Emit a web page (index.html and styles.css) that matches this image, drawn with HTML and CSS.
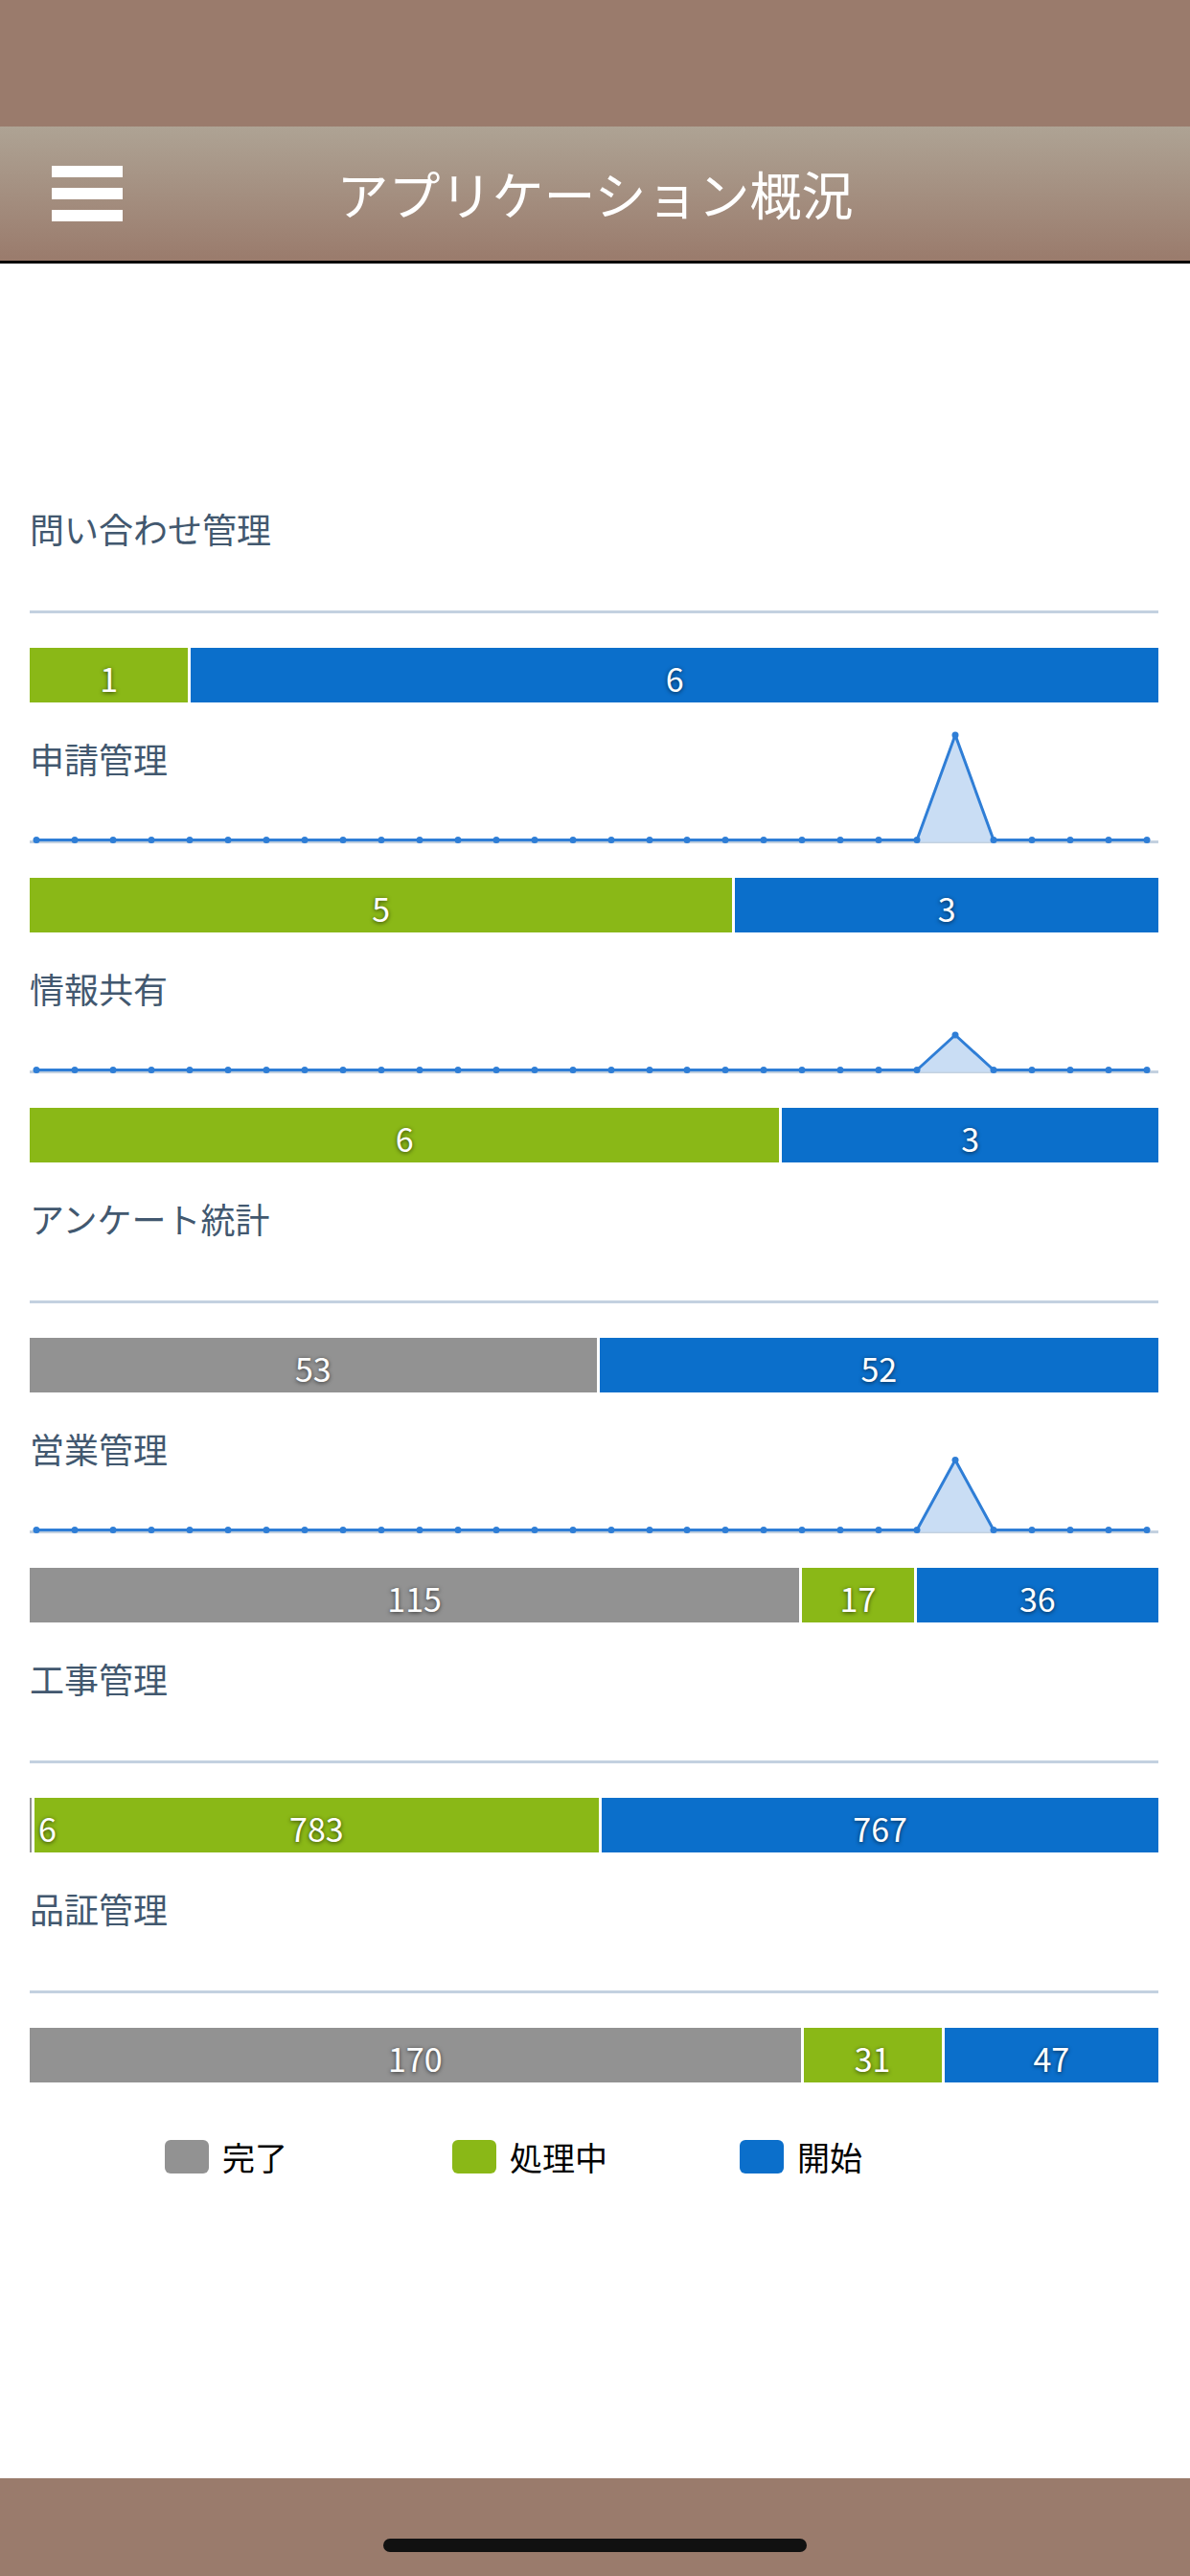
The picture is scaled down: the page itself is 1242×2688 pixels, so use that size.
FILE: index.html
```html
<!DOCTYPE html>
<html lang="ja">
<head>
<meta charset="utf-8">
<title>アプリケーション概況</title>
<link rel="stylesheet" href="styles.css">
</head>
<body>
<div class="page">
  <div class="status-bar"></div>
  <header class="app-header">
    <div class="menu-btn"><span></span><span></span><span></span></div>
    <h1 class="title">アプリケーション概況</h1>
    <div></div>
  </header>

  <svg class="defs" width="0" height="0">
    <defs>
      <marker id="dot" markerUnits="userSpaceOnUse" markerWidth="10" markerHeight="10" refX="5" refY="5">
        <circle cx="5" cy="5" r="3.5" fill="#2f7ed6"/>
      </marker>
    </defs>
  </svg>

  <main class="content">
    <section class="app">
      <div class="app-name">問い合わせ管理</div>
      <svg class="chart" viewBox="0 0 1178 147"><rect class="axis" x="0" y="108" width="1178" height="3"/></svg>
      <div class="bar">
        <div class="seg green" style="width:14.2857%"><span>1</span></div>
        <div class="seg blue" style="width:85.7143%"><span>6</span></div>
      </div>
    </section>

    <section class="app">
      <div class="app-name">申請管理</div>
      <svg class="chart" viewBox="0 0 1178 147">
        <rect class="axis" x="0" y="108" width="1178" height="3"/>
        <polygon class="area" points="926,109.5 926,107.5 966,-2 1006,107.5 1006,109.5"/>
        <polyline class="line" points="7,107.5 47,107.5 87,107.5 127,107.5 167,107.5 207,107.5 247,107.5 287,107.5 327,107.5 367,107.5 407,107.5 447,107.5 487,107.5 527,107.5 567,107.5 607,107.5 647,107.5 686,107.5 726,107.5 766,107.5 806,107.5 846,107.5 886,107.5 926,107.5 966,-2 1006,107.5 1046,107.5 1086,107.5 1126,107.5 1166,107.5"/>
      </svg>
      <div class="bar">
        <div class="seg green" style="width:62.5%"><span>5</span></div>
        <div class="seg blue" style="width:37.5%"><span>3</span></div>
      </div>
    </section>

    <section class="app">
      <div class="app-name">情報共有</div>
      <svg class="chart" viewBox="0 0 1178 147">
        <rect class="axis" x="0" y="108" width="1178" height="3"/>
        <polygon class="area" points="926,109.5 926,107.5 966,71 1006,107.5 1006,109.5"/>
        <polyline class="line" points="7,107.5 47,107.5 87,107.5 127,107.5 167,107.5 207,107.5 247,107.5 287,107.5 327,107.5 367,107.5 407,107.5 447,107.5 487,107.5 527,107.5 567,107.5 607,107.5 647,107.5 686,107.5 726,107.5 766,107.5 806,107.5 846,107.5 886,107.5 926,107.5 966,71 1006,107.5 1046,107.5 1086,107.5 1126,107.5 1166,107.5"/>
      </svg>
      <div class="bar">
        <div class="seg green" style="width:66.6667%"><span>6</span></div>
        <div class="seg blue" style="width:33.3333%"><span>3</span></div>
      </div>
    </section>

    <section class="app">
      <div class="app-name">アンケート統計</div>
      <svg class="chart" viewBox="0 0 1178 147"><rect class="axis" x="0" y="108" width="1178" height="3"/></svg>
      <div class="bar">
        <div class="seg gray" style="width:50.4762%"><span>53</span></div>
        <div class="seg blue" style="width:49.5238%"><span>52</span></div>
      </div>
    </section>

    <section class="app">
      <div class="app-name">営業管理</div>
      <svg class="chart" viewBox="0 0 1178 147">
        <rect class="axis" x="0" y="108" width="1178" height="3"/>
        <polygon class="area" points="926,109.5 926,107.5 966,34.5 1006,107.5 1006,109.5"/>
        <polyline class="line" points="7,107.5 47,107.5 87,107.5 127,107.5 167,107.5 207,107.5 247,107.5 287,107.5 327,107.5 367,107.5 407,107.5 447,107.5 487,107.5 527,107.5 567,107.5 607,107.5 647,107.5 686,107.5 726,107.5 766,107.5 806,107.5 846,107.5 886,107.5 926,107.5 966,34.5 1006,107.5 1046,107.5 1086,107.5 1126,107.5 1166,107.5"/>
      </svg>
      <div class="bar">
        <div class="seg gray" style="width:68.4524%"><span>115</span></div>
        <div class="seg green" style="width:10.1190%"><span>17</span></div>
        <div class="seg blue" style="width:21.4286%"><span>36</span></div>
      </div>
    </section>

    <section class="app">
      <div class="app-name">工事管理</div>
      <svg class="chart" viewBox="0 0 1178 147"><rect class="axis" x="0" y="108" width="1178" height="3"/></svg>
      <div class="bar">
        <div class="seg gray tiny" style="width:0.3856%"><span>6</span></div>
        <div class="seg green" style="width:50.3213%"><span>783</span></div>
        <div class="seg blue" style="width:49.2931%"><span>767</span></div>
      </div>
    </section>

    <section class="app">
      <div class="app-name">品証管理</div>
      <svg class="chart" viewBox="0 0 1178 147"><rect class="axis" x="0" y="108" width="1178" height="3"/></svg>
      <div class="bar">
        <div class="seg gray" style="width:68.5484%"><span>170</span></div>
        <div class="seg green" style="width:12.5000%"><span>31</span></div>
        <div class="seg blue" style="width:18.9516%"><span>47</span></div>
      </div>
    </section>

    <div class="legend">
      <div class="legend-item"><span class="swatch gray"></span><span class="legend-text">完了</span></div>
      <div class="legend-item"><span class="swatch green"></span><span class="legend-text">処理中</span></div>
      <div class="legend-item"><span class="swatch blue"></span><span class="legend-text">開始</span></div>
    </div>
  </main>

  <footer class="home-area"><div class="home-indicator"></div></footer>
</div>
</body>
</html>
```

FILE: styles.css
```css
* { box-sizing: border-box; }

html, body {
  margin: 0;
  padding: 0;
  background: #ffffff;
}

body {
  font-family: "Noto Sans CJK JP", "Noto Sans", sans-serif;
}

.page {
  width: 1242px;
  height: 2688px;
  display: flex;
  flex-direction: column;
  overflow: hidden;
}

.status-bar {
  height: 132px;
  background: #9a7b6c;
  flex: 0 0 auto;
}

.app-header {
  height: 143px;
  flex: 0 0 auto;
  background: linear-gradient(to bottom, #aea394 0%, #a48f80 50%, #9a7b6c 100%);
  border-bottom: 3px solid #000000;
  display: grid;
  grid-template-columns: 1fr auto 1fr;
  align-items: center;
  padding-left: 54px;
}

.menu-btn {
  display: flex;
  flex-direction: column;
  gap: 11px;
  width: 74px;
}

.menu-btn span {
  display: block;
  height: 12px;
  background: #ffffff;
}

.title {
  margin: 0;
  font-size: 54px;
  font-weight: 400;
  color: #ffffff;
  line-height: 60px;
  white-space: nowrap;
  position: relative;
  left: -27px;
}

.defs {
  position: absolute;
  width: 0;
  height: 0;
}

.content {
  padding: 254px 33px 0 31px;
  flex: 1 1 auto;
}

.app {
  display: grid;
  grid-template-rows: 147px 57px;
  margin-bottom: 36px;
}

.app-name {
  grid-row: 1;
  grid-column: 1;
  font-size: 36px;
  line-height: 44px;
  color: #42586f;
  align-self: start;
}

.chart {
  grid-row: 1;
  grid-column: 1;
  width: 1178px;
  height: 147px;
  overflow: visible;
  display: block;
}

.axis { fill: #c3d1e0; }

.area { fill: #c9ddf4; }

.line {
  fill: none;
  stroke: #2f7ed6;
  stroke-width: 3;
  stroke-linejoin: round;
  marker-start: url(#dot);
  marker-mid: url(#dot);
  marker-end: url(#dot);
}

.bar {
  grid-row: 2;
  display: flex;
  height: 57px;
  width: 1178px;
}

.seg {
  height: 57px;
  display: flex;
  align-items: center;
  justify-content: center;
  border-right: 3px solid #ffffff;
  flex: 0 0 auto;
}

.seg:last-child { border-right: none; }

.seg span {
  font-family: "Noto Sans CJK JP", "Noto Sans", sans-serif;
  font-size: 34px;
  line-height: 1;
  padding-top: 6px;
  color: #ffffff;
  text-shadow: 0 1px 4px rgba(0, 0, 0, 0.65);
  white-space: nowrap;
  position: relative;
  z-index: 1;
}

.seg.tiny {
  justify-content: flex-start;
}

.seg.tiny span {
  margin-left: 9px;
}

.gray { background: #929292; }
.green { background: #8ab817; }
.blue { background: #0b6fcb; }

.legend {
  display: flex;
  padding-left: 141px;
  margin-top: 60px;
}

.legend-item {
  flex: 0 0 300px;
  display: flex;
  align-items: center;
}

.swatch {
  display: block;
  width: 46px;
  height: 35px;
  border-radius: 6px;
}

.legend-text {
  margin-left: 14px;
  font-size: 34px;
  line-height: 35px;
  color: #000000;
}

.home-area {
  height: 102px;
  flex: 0 0 auto;
  background: #9a7b6c;
  display: flex;
  justify-content: center;
  padding-top: 63px;
}

.home-indicator {
  width: 442px;
  height: 14px;
  border-radius: 7px;
  background: #111111;
}
```
